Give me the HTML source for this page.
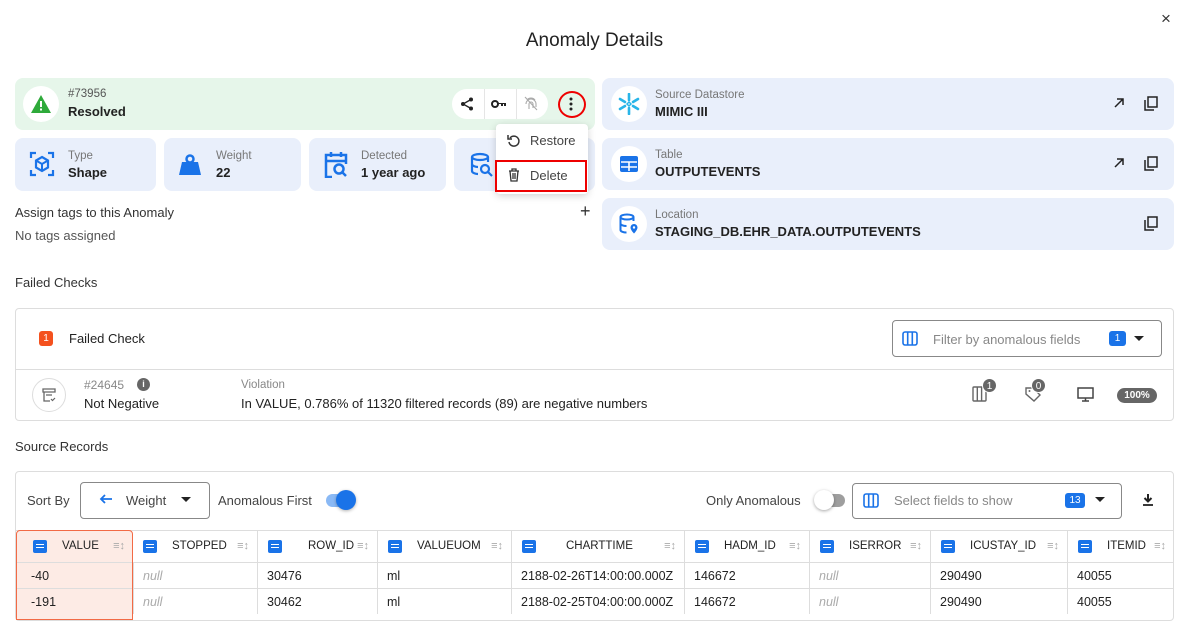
<!DOCTYPE html><html><head><meta charset="utf-8"><style>
*{box-sizing:border-box;margin:0;padding:0}
body{width:1189px;height:613px;overflow:hidden;background:#fff;font-family:"Liberation Sans",sans-serif;color:#222;position:relative;font-size:13px}
.a{position:absolute}
.card{position:absolute;background:#e9effb;border-radius:8px}
.lbl{position:absolute;font-size:11.5px;color:#777}
.val{position:absolute;font-size:13px;font-weight:bold;color:#222}
.circ{position:absolute;width:36px;height:36px;border-radius:50%;background:#fff;display:flex;align-items:center;justify-content:center}
.th{position:absolute;top:530px;height:32px;border-right:1px solid #ddd;font-size:11.5px;color:#222;display:flex;align-items:center}
.td{position:absolute;height:26px;border-right:1px solid #ddd;border-top:1px solid #ddd;font-size:12.5px;display:flex;align-items:center;padding-left:9px}
.null{color:#aaa;font-style:italic}
.ci{width:14px;height:13px;background:#1a73e8;border-radius:2px;margin-left:10px;position:relative}
.ci:after{content:"";position:absolute;left:3px;top:4px;width:8px;height:1.5px;background:#fff;box-shadow:0 3px 0 #fff}
.si{position:absolute;right:8px;color:#aaa;font-size:11px}
</style></head><body>
<div class="a" style="left:0;top:30px;width:1189px;text-align:center;font-size:19px;color:#222">Anomaly Details</div>
<div class="a" style="left:1161px;top:9px;font-size:17px;color:#333">×</div>

<div class="a" style="left:15px;top:78px;width:580px;height:52px;background:#e6f6ea;border-radius:8px"></div>
<div class="circ" style="left:23px;top:86px"><svg width="22" height="20" viewBox="0 0 22 20"><path d="M11 1L21 19H1Z" fill="#2eaa3a"/><rect x="10" y="7" width="2" height="6" fill="#fff"/><rect x="10" y="14.5" width="2" height="2" fill="#fff"/></svg></div>
<div class="lbl" style="left:68px;top:88px;color:#555">#73956</div>
<div class="val" style="left:68px;top:104px">Resolved</div>
<div class="a" style="left:452px;top:89px;width:96px;height:30px;background:#fff;border-radius:15px"></div>
<div class="a" style="left:484px;top:89px;width:1px;height:30px;background:#e5e5e5"></div>
<div class="a" style="left:516px;top:89px;width:1px;height:30px;background:#e5e5e5"></div>
<svg class="a" style="left:460px;top:97px" width="14" height="14" viewBox="0 0 14 14"><circle cx="11" cy="2.5" r="2" fill="#222"/><circle cx="3" cy="7" r="2" fill="#222"/><circle cx="11" cy="11.5" r="2" fill="#222"/><path d="M11 2.5L3 7L11 11.5" stroke="#222" stroke-width="1.3" fill="none"/></svg>
<svg class="a" style="left:491px;top:99px" width="16" height="10" viewBox="0 0 16 10"><circle cx="4" cy="5" r="3" fill="none" stroke="#222" stroke-width="2"/><path d="M7 4h8v3h-2v-2h-1v2h-2v-2H7z" fill="#222"/></svg>
<svg class="a" style="left:524px;top:96px" width="14" height="15" viewBox="0 0 14 15"><path d="M3 4a5 5 0 0 1 8 0M2 8a5 5 0 0 1 10 0v3M5 13V8a2 2 0 0 1 4 0v4M1 1l12 13" stroke="#aaa" stroke-width="1.1" fill="none"/></svg>
<div class="a" style="left:558px;top:91px;width:28px;height:27px;border:2px solid #e00;border-radius:50%"></div>
<svg class="a" style="left:569px;top:97px" width="4" height="14"><circle cx="2" cy="2" r="1.5" fill="#222"/><circle cx="2" cy="7" r="1.5" fill="#222"/><circle cx="2" cy="12" r="1.5" fill="#222"/></svg>

<div class="card" style="left:15px;top:138px;width:141px;height:53px"></div>
<div class="card" style="left:164px;top:138px;width:137px;height:53px"></div>
<div class="card" style="left:309px;top:138px;width:137px;height:53px"></div>
<div class="card" style="left:454px;top:138px;width:141px;height:53px"></div>
<svg class="a" style="left:29px;top:151px" width="26" height="26" viewBox="0 0 26 26"><path d="M2 7V2h5M19 2h5v5M24 19v5h-5M7 24H2v-5" stroke="#1a73e8" stroke-width="2.2" fill="none"/><path d="M13 6l6 3.5v7L13 20l-6-3.5v-7z" stroke="#1a73e8" stroke-width="2.2" fill="none"/><path d="M7 9.5l6 3.5 6-3.5M13 13v7" stroke="#1a73e8" stroke-width="2" fill="none"/></svg>
<div class="lbl" style="left:68px;top:150px">Type</div><div class="val" style="left:68px;top:165px">Shape</div>
<svg class="a" style="left:178px;top:154px" width="24" height="22" viewBox="0 0 24 22"><circle cx="12" cy="5" r="3.5" fill="none" stroke="#1a73e8" stroke-width="2.5"/><path d="M4 8h16l3 13H1z" fill="#1a73e8"/></svg>
<div class="lbl" style="left:216px;top:150px">Weight</div><div class="val" style="left:216px;top:165px">22</div>
<svg class="a" style="left:323px;top:150px" width="26" height="28" viewBox="0 0 26 28"><path d="M9 27H3V5h20v9M3 11h20M8 2v5M18 2v5" stroke="#1a73e8" stroke-width="2.5" fill="none"/><circle cx="16" cy="19" r="4.5" stroke="#1a73e8" stroke-width="2.5" fill="none"/><path d="M19 22l4 4" stroke="#1a73e8" stroke-width="2.5"/></svg>
<div class="lbl" style="left:361px;top:150px">Detected</div><div class="val" style="left:361px;top:165px">1 year ago</div>
<svg class="a" style="left:470px;top:152px" width="24" height="26" viewBox="0 0 24 26"><ellipse cx="10" cy="5" rx="8" ry="3" stroke="#1a73e8" stroke-width="2.2" fill="none"/><path d="M2 5v14c0 2 4 3 6 3M18 5v5M2 12c0 2 4 3 6 3" stroke="#1a73e8" stroke-width="2.2" fill="none"/><circle cx="15" cy="17" r="4" stroke="#1a73e8" stroke-width="2.2" fill="none"/><path d="M18 20l4 4" stroke="#1a73e8" stroke-width="2.2"/></svg>

<div class="a" style="left:496px;top:124px;width:92px;height:70px;background:#fff;border-radius:4px;box-shadow:0 2px 8px rgba(0,0,0,.18)"></div>
<svg class="a" style="left:507px;top:134px" width="14" height="14" viewBox="0 0 14 14"><path d="M3 4a5 5 0 1 1-1 4" stroke="#333" stroke-width="1.5" fill="none"/><path d="M1 1v4h4" stroke="#333" stroke-width="1.5" fill="none"/></svg>
<div class="a" style="left:530px;top:133px;font-size:13px;color:#444">Restore</div>
<div class="a" style="left:495px;top:160px;width:92px;height:32px;border:2px solid #e00"></div>
<svg class="a" style="left:508px;top:168px" width="12" height="14" viewBox="0 0 12 14"><path d="M1 3h10M4 3V1h4v2M2 3l1 10h6l1-10M5 5v6M7 5v6" stroke="#333" stroke-width="1.3" fill="none"/></svg>
<div class="a" style="left:530px;top:168px;font-size:13px;color:#444">Delete</div>

<div class="a" style="left:15px;top:205px;font-size:13px;color:#333">Assign tags to this Anomaly</div>
<div class="a" style="left:580px;top:201px;font-size:18px;color:#333">+</div>
<div class="a" style="left:15px;top:228px;font-size:13px;color:#555">No tags assigned</div>

<div class="card" style="left:602px;top:78px;width:572px;height:52px"></div>
<div class="card" style="left:602px;top:138px;width:572px;height:52px"></div>
<div class="card" style="left:602px;top:198px;width:572px;height:52px"></div>
<div class="circ" style="left:611px;top:86px"><svg width="22" height="22" viewBox="0 0 22 22" stroke="#29b5e8" stroke-width="2.6" stroke-linecap="round" fill="none"><path d="M11 1v6M11 15v6M2 6l5 3M15 13l5 3M2 16l5-3M15 9l5-3"/><path d="M11 9l2 2-2 2-2-2z" stroke-width="1.5"/></svg></div>
<div class="circ" style="left:611px;top:146px"><svg width="18" height="16" viewBox="0 0 18 16"><rect width="18" height="16" rx="2" fill="#1a73e8"/><path d="M1 6h16M1 11h16M9 6v9" stroke="#fff" stroke-width="1.6"/></svg></div>
<div class="circ" style="left:611px;top:206px"><svg width="20" height="22" viewBox="0 0 20 22"><ellipse cx="8" cy="4" rx="6.5" ry="2.5" stroke="#1a73e8" stroke-width="2" fill="none"/><path d="M1.5 4v13c0 1.5 3 2.5 6 2.5M14.5 4v4M1.5 10.5c0 1.5 3 2.5 6 2.5" stroke="#1a73e8" stroke-width="2" fill="none"/><path d="M15 11a3.5 3.5 0 0 1 3.5 3.5c0 2.5-3.5 6-3.5 6s-3.5-3.5-3.5-6A3.5 3.5 0 0 1 15 11z" fill="#1a73e8"/><circle cx="15" cy="14.5" r="1.2" fill="#fff"/></svg></div>
<div class="lbl" style="left:655px;top:89px">Source Datastore</div><div class="val" style="left:655px;top:104px">MIMIC III</div>
<div class="lbl" style="left:655px;top:149px">Table</div><div class="val" style="left:655px;top:164px">OUTPUTEVENTS</div>
<div class="lbl" style="left:655px;top:209px">Location</div><div class="val" style="left:655px;top:224px">STAGING_DB.EHR_DATA.OUTPUTEVENTS</div>
<svg class="a" style="left:1114px;top:98px" width="10" height="10" viewBox="0 0 10 10"><path d="M1 9L9 1M3 1h6v6" stroke="#222" stroke-width="1.5" fill="none"/></svg>
<svg class="a" style="left:1114px;top:158px" width="10" height="10" viewBox="0 0 10 10"><path d="M1 9L9 1M3 1h6v6" stroke="#222" stroke-width="1.5" fill="none"/></svg>
<svg class="a" style="left:1144px;top:96px" width="14" height="15" viewBox="0 0 14 15"><path d="M1 4v10h9M4 1h9v10H4z" stroke="#222" stroke-width="1.5" fill="none"/></svg>
<svg class="a" style="left:1144px;top:156px" width="14" height="15" viewBox="0 0 14 15"><path d="M1 4v10h9M4 1h9v10H4z" stroke="#222" stroke-width="1.5" fill="none"/></svg>
<svg class="a" style="left:1144px;top:216px" width="14" height="15" viewBox="0 0 14 15"><path d="M1 4v10h9M4 1h9v10H4z" stroke="#222" stroke-width="1.5" fill="none"/></svg>

<div class="a" style="left:15px;top:275px;font-size:13px;color:#333">Failed Checks</div>
<div class="a" style="left:15px;top:308px;width:1159px;height:113px;border:1px solid #ddd;border-radius:4px"></div>
<div class="a" style="left:16px;top:369px;width:1157px;height:1px;background:#ddd"></div>
<div class="a" style="left:39px;top:331px;width:14px;height:15px;background:#f4511e;border-radius:3px;color:#fff;font-size:10px;text-align:center;line-height:15px">1</div>
<div class="a" style="left:69px;top:331px;font-size:13px;color:#222">Failed Check</div>
<div class="a" style="left:892px;top:320px;width:270px;height:37px;border:1px solid #888;border-radius:4px"></div>
<svg class="a" style="left:902px;top:331px" width="16" height="15" viewBox="0 0 16 15"><rect x="1" y="1" width="14" height="13" rx="2" stroke="#1a73e8" stroke-width="1.6" fill="none"/><path d="M5.7 1v13M10.3 1v13" stroke="#1a73e8" stroke-width="1.6"/></svg>
<div class="a" style="left:933px;top:332px;font-size:13px;color:#888">Filter by anomalous fields</div>
<div class="a" style="left:1109px;top:331px;width:17px;height:15px;background:#1a73e8;border-radius:3px;color:#fff;font-size:10px;text-align:center;line-height:15px">1</div>
<div class="a" style="left:1134px;top:336px;border:5px solid transparent;border-top:5px solid #222"></div>

<div class="a" style="left:32px;top:378px;width:34px;height:34px;border:1px solid #ddd;border-radius:50%"></div>
<svg class="a" style="left:42px;top:388px" width="14" height="14" viewBox="0 0 14 14"><path d="M1 1h12v3H1zM2 4v9h6M4 7h6" stroke="#666" stroke-width="1.3" fill="none"/><path d="M9 11l1.5 1.5L13 10" stroke="#666" stroke-width="1.2" fill="none"/></svg>
<div class="a" style="left:84px;top:378px;font-size:12px;color:#888">#24645</div>
<div class="a" style="left:137px;top:378px;width:13px;height:13px;background:#666;border-radius:50%;color:#fff;font-size:9px;text-align:center;line-height:13px;font-weight:bold">i</div>
<div class="a" style="left:84px;top:396px;font-size:13px;color:#222">Not Negative</div>
<div class="a" style="left:241px;top:379px;font-size:11.5px;color:#888">Violation</div>
<div class="a" style="left:241px;top:396px;font-size:13px;color:#222">In VALUE, 0.786% of 11320 filtered records (89) are negative numbers</div>
<svg class="a" style="left:972px;top:386px" width="16" height="16" viewBox="0 0 16 16"><rect x="1" y="1" width="13" height="14" rx="1" stroke="#666" stroke-width="1.4" fill="none"/><path d="M5.3 1v14M9.6 1v14" stroke="#666" stroke-width="1.4"/></svg>
<div class="a" style="left:982px;top:378px;width:15px;height:15px;background:#666;border-radius:50%;color:#fff;font-size:10px;text-align:center;line-height:15px;border:1px solid #fff">1</div>
<svg class="a" style="left:1025px;top:386px" width="16" height="16" viewBox="0 0 16 16"><path d="M1 2v6l8 7 6-6-7-7z" stroke="#666" stroke-width="1.4" fill="none"/><circle cx="4.5" cy="5" r="1" fill="#666"/></svg>
<div class="a" style="left:1031px;top:378px;width:15px;height:15px;background:#666;border-radius:50%;color:#fff;font-size:10px;text-align:center;line-height:15px;border:1px solid #fff">0</div>
<svg class="a" style="left:1077px;top:387px" width="17" height="15" viewBox="0 0 17 15"><rect x="1" y="1" width="15" height="10" stroke="#444" stroke-width="1.5" fill="none"/><path d="M8.5 11v3M5 14h7" stroke="#444" stroke-width="1.5"/></svg>
<div class="a" style="left:1117px;top:388px;width:40px;height:15px;background:#666;border-radius:8px;color:#fff;font-size:10px;font-weight:bold;text-align:center;line-height:15px">100%</div>

<div class="a" style="left:15px;top:439px;font-size:13px;color:#333">Source Records</div>
<div class="a" style="left:15px;top:471px;width:1159px;height:150px;border:1px solid #ddd;border-radius:4px"></div>
<div class="a" style="left:27px;top:493px;font-size:13px;color:#444">Sort By</div>
<div class="a" style="left:80px;top:482px;width:130px;height:37px;border:1px solid #888;border-radius:4px"></div>
<svg class="a" style="left:99px;top:494px" width="14" height="10" viewBox="0 0 14 10"><path d="M13 5H2M6 1L2 5l4 4" stroke="#1a73e8" stroke-width="1.8" fill="none"/></svg>
<div class="a" style="left:126px;top:493px;font-size:13px;color:#444">Weight</div>
<div class="a" style="left:181px;top:497px;border:5px solid transparent;border-top:5px solid #222"></div>
<div class="a" style="left:218px;top:493px;font-size:13px;color:#444">Anomalous First</div>
<div class="a" style="left:326px;top:494px;width:28px;height:13px;border-radius:7px;background:#8ab9f5"></div>
<div class="a" style="left:336px;top:490px;width:20px;height:20px;border-radius:50%;background:#1a73e8;box-shadow:0 1px 3px rgba(0,0,0,.3)"></div>
<div class="a" style="left:706px;top:493px;font-size:13px;color:#444">Only Anomalous</div>
<div class="a" style="left:817px;top:494px;width:28px;height:13px;border-radius:7px;background:#9e9e9e"></div>
<div class="a" style="left:814px;top:490px;width:20px;height:20px;border-radius:50%;background:#fff;box-shadow:0 1px 3px rgba(0,0,0,.35)"></div>
<div class="a" style="left:852px;top:483px;width:270px;height:36px;border:1px solid #888;border-radius:4px"></div>
<svg class="a" style="left:863px;top:493px" width="16" height="15" viewBox="0 0 16 15"><rect x="1" y="1" width="14" height="13" rx="2" stroke="#1a73e8" stroke-width="1.6" fill="none"/><path d="M5.7 1v13M10.3 1v13" stroke="#1a73e8" stroke-width="1.6"/></svg>
<div class="a" style="left:894px;top:493px;font-size:13px;color:#888">Select fields to show</div>
<div class="a" style="left:1065px;top:493px;width:20px;height:15px;background:#1a73e8;border-radius:3px;color:#fff;font-size:10px;text-align:center;line-height:15px">13</div>
<div class="a" style="left:1095px;top:497px;border:5px solid transparent;border-top:5px solid #222"></div>
<svg class="a" style="left:1142px;top:493px" width="12" height="13" viewBox="0 0 12 13"><path d="M6 1v7M2.5 5L6 8.5 9.5 5" stroke="#222" stroke-width="2" fill="none"/><path d="M1 12h10" stroke="#222" stroke-width="1.8"/></svg>

<div class="a" style="left:16px;top:530px;width:1158px;height:1px;background:#ddd"></div>
<div class="a" style="left:16px;top:530px;width:117px;height:90px;background:#fdebe5;border:1px solid #f26a45;border-radius:4px 4px 0 0"></div>
<div class="th" style="left:16px;width:117px;border:none"><div class="ci" style="margin-left:17px"></div><span style="margin-left:15px">VALUE</span><span class="si">≡↕</span></div>
<div class="th" style="left:133px;width:125px;border-left:0"><div class="ci"></div><span style="margin-left:15px">STOPPED</span><span class="si">≡↕</span></div>
<div class="th" style="left:258px;width:120px"><div class="ci"></div><span style="margin-left:26px">ROW_ID</span><span class="si">≡↕</span></div>
<div class="th" style="left:378px;width:134px"><div class="ci"></div><span style="margin-left:15px">VALUEUOM</span><span class="si">≡↕</span></div>
<div class="th" style="left:512px;width:173px"><div class="ci"></div><span style="margin-left:30px">CHARTTIME</span><span class="si">≡↕</span></div>
<div class="th" style="left:685px;width:125px"><div class="ci"></div><span style="margin-left:15px">HADM_ID</span><span class="si">≡↕</span></div>
<div class="th" style="left:810px;width:121px"><div class="ci"></div><span style="margin-left:15px">ISERROR</span><span class="si">≡↕</span></div>
<div class="th" style="left:931px;width:137px"><div class="ci"></div><span style="margin-left:15px">ICUSTAY_ID</span><span class="si">≡↕</span></div>
<div class="th" style="left:1068px;width:106px;border-right:0"><div class="ci"></div><span style="margin-left:15px">ITEMID</span><span class="si">≡↕</span></div>

<div class="td" style="left:17px;top:562px;width:115px;border-right:0;border-top-color:#ddd;padding-left:14px">-40</div>
<div class="td" style="left:133px;top:562px;width:125px;border-left:1px solid #ddd"><span class="null">null</span></div>
<div class="td" style="left:258px;top:562px;width:120px">30476</div>
<div class="td" style="left:378px;top:562px;width:134px">ml</div>
<div class="td" style="left:512px;top:562px;width:173px">2188-02-26T14:00:00.000Z</div>
<div class="td" style="left:685px;top:562px;width:125px">146672</div>
<div class="td" style="left:810px;top:562px;width:121px"><span class="null">null</span></div>
<div class="td" style="left:931px;top:562px;width:137px">290490</div>
<div class="td" style="left:1068px;top:562px;width:106px;border-right:0">40055</div>

<div class="td" style="left:17px;top:588px;width:115px;border-right:0;padding-left:14px">-191</div>
<div class="td" style="left:133px;top:588px;width:125px;border-left:1px solid #ddd"><span class="null">null</span></div>
<div class="td" style="left:258px;top:588px;width:120px">30462</div>
<div class="td" style="left:378px;top:588px;width:134px">ml</div>
<div class="td" style="left:512px;top:588px;width:173px">2188-02-25T04:00:00.000Z</div>
<div class="td" style="left:685px;top:588px;width:125px">146672</div>
<div class="td" style="left:810px;top:588px;width:121px"><span class="null">null</span></div>
<div class="td" style="left:931px;top:588px;width:137px">290490</div>
<div class="td" style="left:1068px;top:588px;width:106px;border-right:0">40055</div>
</body></html>
